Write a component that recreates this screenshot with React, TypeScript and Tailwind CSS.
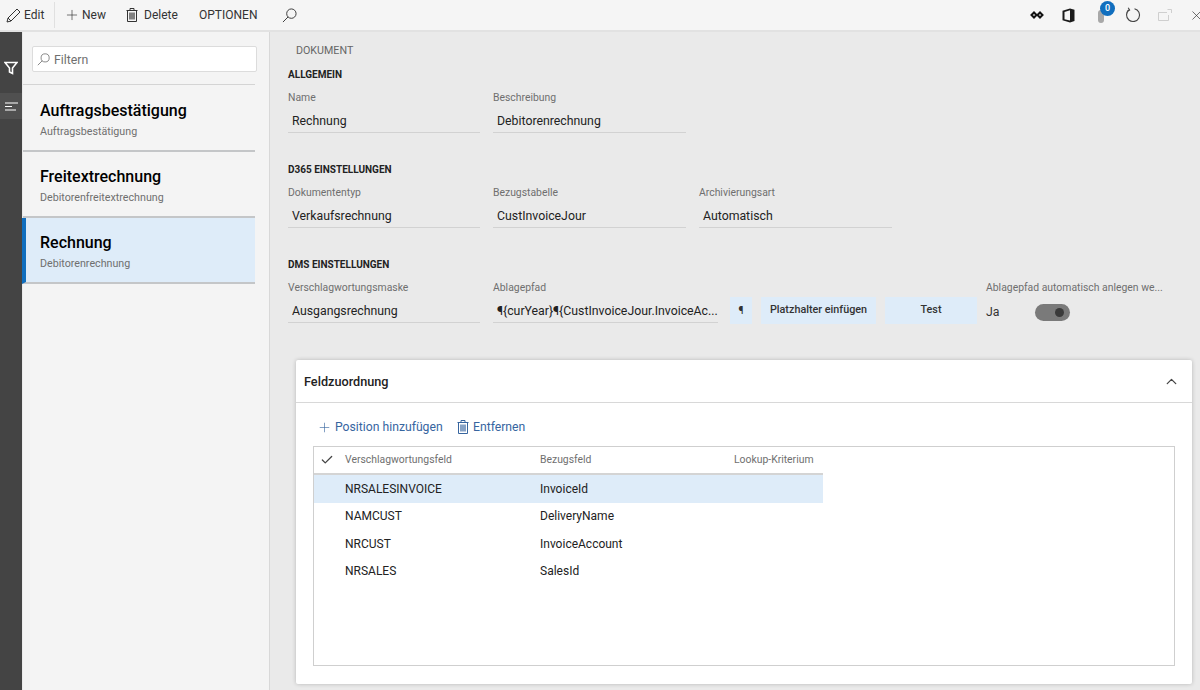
import { Check, ChevronUp, Plus, X } from "lucide-react";

const font = "[font-family:Roboto,sans-serif]";

function SearchIcon({ size, className }: { size: number; className?: string }) {
  return (
    <svg width={size} height={size} viewBox="0 0 16 16" fill="none" stroke="currentColor" strokeWidth="1" className={className}>
      <circle cx="10" cy="6" r="5" />
      <path d="M6.4 9.6 1 15" />
    </svg>
  );
}

function TrashIcon({ className }: { className?: string }) {
  return (
    <svg width="12" height="14" viewBox="0 0 12 14" fill="none" stroke="currentColor" strokeWidth="1" className={className}>
      <path d="M0.5 2.5H11.5M4 2.5V0.5H8V2.5M1.5 2.5V13.5H10.5V2.5" />
      <path d="M4 4.5V11.5M6 4.5V11.5M8 4.5V11.5" strokeWidth="1.2" />
    </svg>
  );
}

function Field({ label, value, width }: { label: string; value: string; width: string }) {
  return (
    <div className={`${width} shrink-0`}>
      <div className="h-[14px] text-[10.4px] leading-[14px] text-[#6f6f6f] whitespace-nowrap">{label}</div>
      <div className="mt-[4px] h-[24px] border-b border-[#d2d2d2] pl-1 text-[12.3px] leading-[25px] text-[#222] whitespace-nowrap">
        {value}
      </div>
    </div>
  );
}

function Section({ title, children, className }: { title: string; children: React.ReactNode; className?: string }) {
  return (
    <section className={className}>
      <h3 className="h-[14px] text-[10px] font-bold leading-[14px] text-[#222]">{title}</h3>
      <div className="mt-[9px] flex gap-[13px]">{children}</div>
    </section>
  );
}

function ListItem({ title, sub, active }: { title: string; sub: string; active?: boolean }) {
  return (
    <div className={`h-[66px] border-b-2 border-[#c4c6c8] pt-[13px] ${active ? "-ml-px border-l-[4px] border-l-[#106ebe] bg-[#deecf9] pl-[14px]" : "pl-[17px]"}`}>
      <div className="text-[16px] font-medium leading-[24px] text-black">{title}</div>
      <div className="mt-[1px] text-[10.7px] leading-[15px] text-[#6f6f6f]">{sub}</div>
    </div>
  );
}

const rows = [
  ["NRSALESINVOICE", "InvoiceId"],
  ["NAMCUST", "DeliveryName"],
  ["NRCUST", "InvoiceAccount"],
  ["NRSALES", "SalesId"],
];

export default function App() {
  return (
    <div className={`${font} flex h-[690px] w-[1200px] flex-col overflow-hidden bg-[#eaeaea]`}>
      {/* toolbar */}
      <header className="flex h-[32px] shrink-0 items-center overflow-hidden border-b-2 border-[#e2e2e2] bg-[#f5f5f5] pl-[6px] text-[12px] text-[#333]">
        <svg width="15" height="15" viewBox="0 0 15 15" fill="none" stroke="#333" strokeWidth="1">
          <path d="M1 14 2 10 11 1 14 4 5 13ZM2 10 5 13" />
        </svg>
        <span className="ml-[3px] w-[20px]">Edit</span>
        <div className="ml-[10px] h-[26px] w-px bg-[#e0e0e0]" />
        <Plus size={16} strokeWidth={1} className="ml-[9px]" />
        <span className="ml-[2px] w-[25px]">New</span>
        <TrashIcon className="ml-[19px]" />
        <span className="ml-[6px] w-[37px]">Delete</span>
        <span className="ml-[18px] w-[60px]">OPTIONEN</span>
        <SearchIcon size={15} className="ml-[23px]" />
        <div className="ml-auto flex items-center">
          <svg width="14" height="10" viewBox="0 0 14 10" fill="none" stroke="#111" strokeWidth="2">
            <path d="M1.5 5 4 2.5 6.5 5 4 7.5zM7.5 5 10 2.5 12.5 5 10 7.5z" />
          </svg>
          <svg width="13" height="15" viewBox="0 0 13 15" className="ml-[18px]">
            <path d="M0.5 2.8 8 0.5 12.5 1.8V13L8 14.5 0.5 12.2ZM2.5 3.9V11.2L8 12.6V2.3Z" fill="#1a1a1a" />
          </svg>
          <div className="relative ml-[23px] h-[16px] w-[8px]">
            <div className="absolute bottom-0 left-0 h-[13px] w-[6px] rounded-full bg-[#a8a8a8]" />
            <div className="absolute -right-[9px] -top-[6px] flex h-[15px] w-[15px] items-center justify-center rounded-full bg-[#106ebe] text-[9px] font-medium text-white">0</div>
          </div>
          <svg width="16" height="16" viewBox="0 0 16 16" fill="none" stroke="#444" strokeWidth="1.1" className="ml-[19px]">
            <path d="M9.5 1.7A6.5 6.5 0 1 1 4.2 2.8" />
            <path d="M3.2 0.8 4.6 3 2.2 4.2" />
          </svg>
          <svg width="14" height="12" viewBox="0 0 14 12" fill="none" stroke="#cfcfcf" className="ml-[17px]">
            <path d="M9 3.5H0.5V11.5H10.5V6M9.5 0.5H13.5V4" />
          </svg>
          <X size={15} strokeWidth={1.1} className="ml-[17px] mr-[-4px]" />
        </div>
      </header>

      <div className="flex min-h-0 flex-1">
        {/* rail */}
        <nav className="w-[22px] shrink-0 bg-[#444444]">
          <div className="mt-[20px] flex h-[31px] items-center justify-center">
            <svg width="14" height="14" viewBox="0 0 14 14" fill="none" stroke="white" strokeWidth="1.6">
              <path d="M1 1.5H13L8.5 7V12.5L5.5 11V7Z" />
            </svg>
          </div>
          <div className="mt-[10px] flex h-[26px] items-center justify-center bg-[#505050]">
            <svg width="15" height="9" viewBox="0 0 15 9" stroke="white" strokeWidth="1.2">
              <path d="M1 1H14M1 4.5H8M1 8H12" />
            </svg>
          </div>
        </nav>

        {/* list */}
        <aside className="ml-px w-[247px] shrink-0 border-r border-[#d8d8d8] bg-[#f4f4f4] pr-[14px]">
          <div className="-mr-[2px] pl-[9px] pt-[14px]">
            <div className="flex h-[26px] items-center rounded-[2px] border border-[#dcdcdc] bg-white pl-[4px] text-[12.3px] text-[#6f6f6f]">
              <SearchIcon size={13} />
              <span className="ml-[4px] pt-[3px]">Filtern</span>
            </div>
          </div>
          <div className="mt-[12px] mb-px border-b border-[#d4d4d4]" />
          <ListItem title="Auftragsbestätigung" sub="Auftragsbestätigung" />
          <ListItem title="Freitextrechnung" sub="Debitorenfreitextrechnung" />
          <ListItem title="Rechnung" sub="Debitorenrechnung" active />
        </aside>

        {/* form */}
        <main className="min-w-0 flex-1 pl-[18px] pr-[8px]">
          <div className="ml-[8px] pt-[12px] text-[10.7px] leading-[14px] text-[#666]">DOKUMENT</div>
          <Section title="ALLGEMEIN" className="mt-[10px]">
            <Field label="Name" value="Rechnung" width="w-[192px]" />
            <Field label="Beschreibung" value="Debitorenrechnung" width="w-[193px]" />
          </Section>
          <Section title="D365 EINSTELLUNGEN" className="mt-[30px]">
            <Field label="Dokumententyp" value="Verkaufsrechnung" width="w-[192px]" />
            <Field label="Bezugstabelle" value="CustInvoiceJour" width="w-[193px]" />
            <Field label="Archivierungsart" value="Automatisch" width="w-[193px]" />
          </Section>
          <Section title="DMS EINSTELLUNGEN" className="mt-[30px]">
            <Field label="Verschlagwortungsmaske" value="Ausgangsrechnung" width="w-[192px]" />
            <Field label="Ablagepfad" value="¶{curYear}¶{CustInvoiceJour.InvoiceAc..." width="w-[225px]" />
            <div className="-ml-px flex gap-[9px] pt-[16px]">
              <button className="h-[27px] w-[22px] bg-[#deecf9] text-[10px] font-medium text-[#333]">¶</button>
              <button className="h-[27px] w-[115px] bg-[#deecf9] text-[10.8px] font-medium text-[#333]">Platzhalter einfügen</button>
              <button className="h-[27px] w-[92px] bg-[#deecf9] text-[10.8px] font-medium text-[#333]">Test</button>
            </div>
            <div className="-ml-[4px] w-[178px] shrink-0">
              <div className="h-[14px] whitespace-nowrap text-[10.4px] leading-[14px] text-[#6f6f6f]">Ablagepfad automatisch anlegen we...</div>
              <div className="mt-[7px] flex items-center">
                <span className="w-[14px] text-[12.3px] leading-[20px] text-[#333]">Ja</span>
                <div className="ml-[35px] flex h-[17px] w-[35px] items-center justify-end rounded-full bg-[#7a7a7a] pr-[6px]">
                  <div className="h-[9px] w-[9px] rounded-full bg-[#3a3a3a]" />
                </div>
              </div>
            </div>
          </Section>

          {/* card */}
          <section className="ml-[8px] mt-[36px] h-[324px] w-[896px] rounded-[2px] bg-white shadow-[0_0_4px_rgba(0,0,0,0.22)]">
            <div className="flex h-[43px] items-center justify-between border-b border-[#d8d8d8] pl-[8px] pr-[12px] pt-[2px]">
              <h2 className="text-[12.7px] font-medium text-[#222]">Feldzuordnung</h2>
              <ChevronUp size={17} strokeWidth={1.8} className="-mt-[2px] text-[#444]" />
            </div>
            <div className="flex h-[43px] items-center pl-[21px] pt-[5px] text-[12.2px] text-[#37659f]">
              <Plus size={15} strokeWidth={1} />
              <span className="ml-[3px] w-[108px] whitespace-nowrap">Position hinzufügen</span>
              <TrashIcon className="ml-[14px]" />
              <span className="ml-[4px]">Entfernen</span>
            </div>
            <div className="mx-[17px] h-[220px] border border-[#cfcfcf]">
              <div className="flex h-[28px] w-[509px] items-center border-b-2 border-[#d4d4d4] text-[10.4px] text-[#6f6f6f]">
                <Check size={14} strokeWidth={2.2} className="ml-[6px] text-[#444]" />
                <span className="ml-[11px] w-[195px]">Verschlagwortungsfeld</span>
                <span className="w-[194px]">Bezugsfeld</span>
                <span>Lookup-Kriterium</span>
              </div>
              {rows.map(([a, b], i) => (
                <div key={a} className={`flex h-[27.5px] w-[509px] items-center text-[12px] text-[#222] ${i === 0 ? "bg-[#deecf9]" : ""}`}>
                  <span className="ml-[31px] w-[195px]">{a}</span>
                  <span>{b}</span>
                </div>
              ))}
            </div>
          </section>
        </main>
      </div>
    </div>
  );
}
